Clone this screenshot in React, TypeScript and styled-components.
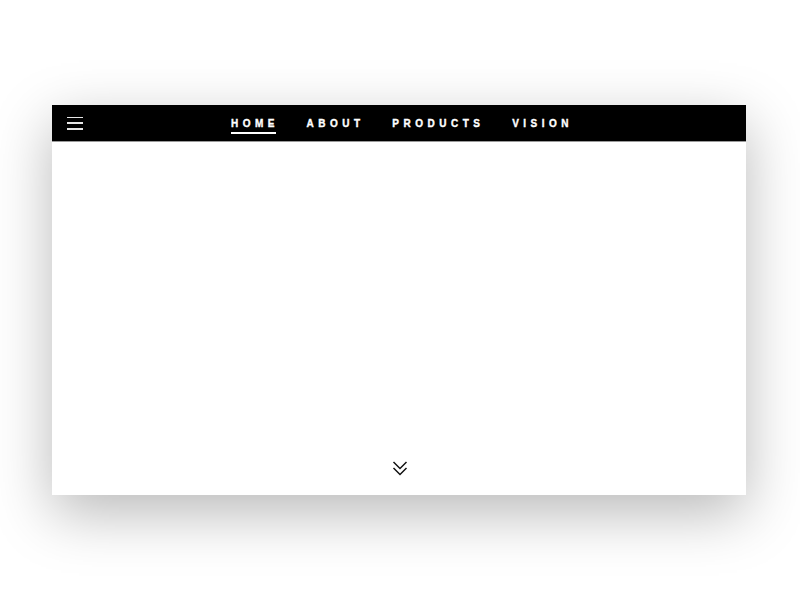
import React from "react";
import styled, { createGlobalStyle } from "styled-components";

const GlobalStyle = createGlobalStyle`
  html, body {
    margin: 0;
    padding: 0;
    background: #ffffff;
    font-family: "Liberation Sans", Arial, sans-serif;
  }
`;

const Page = styled.div`
  width: 800px;
  height: 600px;
  padding-top: 105px;
  box-sizing: border-box;
  overflow: hidden;
`;

const Card = styled.div`
  width: 694px;
  height: 390px;
  margin-left: 52px;
  background: #ffffff;
  box-shadow: 0 18px 55px rgba(0, 0, 0, 0.28);
  display: flex;
  flex-direction: column;
`;

const NavBar = styled.nav`
  height: 36px;
  background: #000000;
  border-bottom: 1px solid #9a9a9a;
  display: grid;
  grid-template-columns: 1fr auto 1fr;
  align-items: center;
  padding: 0 15px;
`;

const MenuButton = styled.button`
  width: 16px;
  height: 13px;
  padding: 0;
  border: none;
  background: transparent;
  display: flex;
  flex-direction: column;
  justify-content: space-between;
  cursor: pointer;
`;

const MenuLine = styled.span`
  display: block;
  height: 1.5px;
  background: #e6e6e6;
`;

const Links = styled.ul`
  list-style: none;
  margin: 2px 0 0 6px;
  padding: 0;
  display: flex;
  gap: 27.7px;
`;

const LinkItem = styled.li<{ $active?: boolean }>`
  position: relative;
  color: #ffffff;
  font-size: 10px;
  font-weight: 700;
  letter-spacing: 4.5px;
  line-height: 12px;
  -webkit-text-stroke: 0.35px #ffffff;

  &::after {
    content: "";
    display: ${({ $active }) => ($active ? "block" : "none")};
    position: absolute;
    left: 0;
    right: 3px;
    bottom: -4px;
    height: 2px;
    background: #ffffff;
  }
`;

const Body = styled.main`
  flex: 1;
  display: flex;
  align-items: flex-end;
  justify-content: center;
  padding-bottom: 19px;
  padding-left: 1px;
`;

const ScrollHint = styled.svg`
  width: 16px;
  height: 15px;
  display: block;
`;

const links = ["HOME", "ABOUT", "PRODUCTS", "VISION"];

const App: React.FC = () => {
  return (
    <>
      <GlobalStyle />
      <Page>
        <Card>
          <NavBar>
            <MenuButton aria-label="menu">
              <MenuLine />
              <MenuLine />
              <MenuLine />
            </MenuButton>
            <Links>
              {links.map((link, i) => (
                <LinkItem key={link} $active={i === 0}>
                  {link}
                </LinkItem>
              ))}
            </Links>
            <span />
          </NavBar>
          <Body>
            <ScrollHint viewBox="0 0 16 15" fill="none" stroke="#111" strokeWidth="1.5">
              <polyline points="1.5,1 8,7.5 14.5,1" />
              <polyline points="1.5,7 8,13.5 14.5,7" />
            </ScrollHint>
          </Body>
        </Card>
      </Page>
    </>
  );
};

export default App;
